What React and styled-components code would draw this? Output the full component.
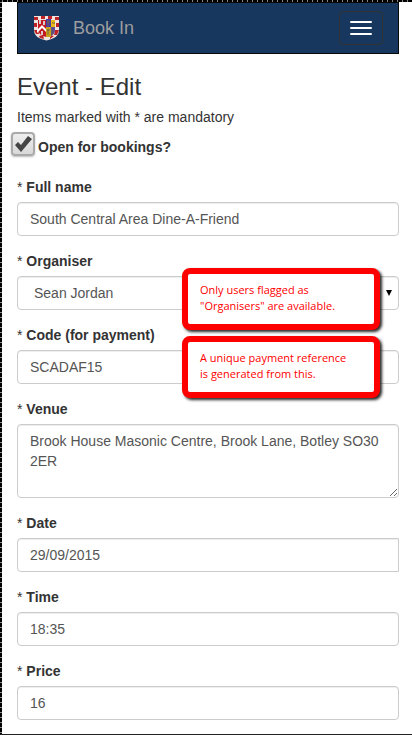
import React from "react";
import styled, { createGlobalStyle, css } from "styled-components";

const GlobalStyle = createGlobalStyle`
  *, *::before, *::after { box-sizing: border-box; }
  body {
    margin: 0;
    background: #fff;
    color: #333;
    font: 14px/20px "Liberation Sans", Arial, sans-serif;
  }
`;

const Page = styled.div`
  padding: 2px 13px 14px 17px;
  border-bottom: 1px solid #222;
  background:
    repeating-linear-gradient(to right, #000 0 2px, #888 2px 3px, #000 3px 5px) top left / 100% 2px no-repeat,
    repeating-linear-gradient(to bottom, #000 0 2px, #888 2px 3px, #000 3px 5px) top left / 2px 100% no-repeat,
    #fff;
`;

const Navbar = styled.header`
  display: flex;
  align-items: center;
  height: 52px;
  padding: 0 15px;
  border: 1px solid #080808;
  background: #18375f;
`;

const Brand = styled.a`
  display: flex;
  align-items: center;
  gap: 14px;
  color: #9d9d9d;
  font-size: 18px;
  text-decoration: none;
`;

const MenuButton = styled.button`
  display: flex;
  flex-direction: column;
  gap: 4px;
  margin-left: auto;
  padding: 9px 10px;
  border: 1px solid #333;
  border-radius: 4px;
  background: transparent;
`;

const MenuBar = styled.span`
  width: 22px;
  height: 2px;
  border-radius: 1px;
  background: #fff;
`;

const Title = styled.h1`
  margin: 20px 0 7px;
  font-size: 24px;
  line-height: 26px;
  font-weight: 400;
`;

const Note = styled.p`
  margin: 0;
`;

const CheckRow = styled.label`
  display: flex;
  align-items: center;
  gap: 3px;
  height: 24px;
  margin: 5px 0 21px -6px;
  font-weight: 700;
`;

const CheckBox = styled.span`
  display: grid;
  width: 24px;
  height: 24px;

  > * { grid-area: 1 / 1; }
  > svg { pointer-events: none; }
`;

const CheckInput = styled.input`
  appearance: none;
  width: 24px;
  height: 24px;
  margin: 0;
  border: 2px solid #aaa;
  border-radius: 4px;
  background: linear-gradient(#eee, #d8d8d8);
  box-shadow: 0 1px 2px #bbb;
`;

const CheckText = styled.span`
  padding-top: 5px;
`;

const Form = styled.form`
  display: grid;
  gap: 15px;
`;

const Field = styled.div`
  position: relative;
  display: grid;
  gap: 5px;
`;

const Label = styled.label`
  font-weight: 700;
`;

const Star = styled.span`
  font-weight: 400;
`;

const control = css`
  display: block;
  width: 100%;
  height: 34px;
  margin: 0;
  padding: 6px 12px;
  border: 1px solid #ccc;
  border-radius: 4px;
  background: #fff;
  box-shadow: inset 0 1px 1px rgba(0, 0, 0, 0.075);
  color: #555;
  font: inherit;
`;

const TextInput = styled.input`
  ${control}
  ${(p) => p.$squareEnd && "border-top-right-radius: 0; border-bottom-right-radius: 0;"}
`;

const TextArea = styled.textarea`
  ${control}
  height: 74px;
  resize: vertical;
`;

const SelectWrap = styled.div`
  display: grid;
  align-items: center;

  > * { grid-area: 1 / 1; }
  > svg { justify-self: end; margin-right: 7px; pointer-events: none; }
`;

const Select = styled.select`
  ${control}
  appearance: none;
  padding: 6px 16px;
`;

const Callout = styled.aside`
  position: absolute;
  z-index: 1;
  top: ${(p) => p.$top}px;
  right: 19px;
  width: 198px;
  padding: 8px 12px 10px;
  border: 6px solid #f00;
  border-radius: 8px;
  background: #fff;
  box-shadow: 2px 2px 3px rgba(0, 0, 0, 0.85);
  color: #f00;
  font: 11px/16px "Open Sans", "Noto Sans", sans-serif;
  white-space: pre-line;
`;

function Crest() {
  return (
    <svg width="26" height="26" viewBox="0 0 26 26" aria-hidden="true">
      <path d="M1 1h25v14c0 6-5 9-12.500 10.500C6 24 1 21 1 15Z" fill="#f0e4e0" />
      <path d="M1 2h4v3H1Zm7-1h4v3H8Zm7 0h4v3h-4Zm7 1h4v3h-4ZM1 8h3v4H1Zm22 0h3v4h-3ZM1 15h4l1 4H3ZM22 15h4l-2 5h-3ZM6 21l4-1 1 4-4-1Zm11-1 4 1-4 3Z" fill="#bd2326" />
      <path d="M5 5h8.500v17C8 21 5 18 5 14Z" fill="#c5161d" />
      <path d="M13 4h5v9h-5Z" fill="#493ba5" />
      <path d="M18 5h4v7h-4Z" fill="#e9b914" />
      <path d="M13 12h5v10h-5Z" fill="#c9a51c" />
      <path d="M18 12h4v3c0 3-2 5-4 6Z" fill="#5b4b96" />
      <path d="m4 15 5-5 4 4v3l-4-4-5 5Z" fill="#fff" />
      <path d="M6 5h2v4H6Zm4 1h2v4h-2ZM8 16h2v4H8Z" fill="#d8c9cc" />
      <path d="M14 7h3m-2-2v6m4-3h3m-8 7h3m-2-1v6m4-5v5" stroke="#756344" />
    </svg>
  );
}

function TextField({ id, label, value, squareEnd, children }) {
  return (
    <Field>
      <Label htmlFor={id}><Star>*</Star> {label}</Label>
      <TextInput id={id} defaultValue={value} $squareEnd={squareEnd} />
      {children}
    </Field>
  );
}

export default function App() {
  return (
    <>
      <GlobalStyle />
      <Page>
        <Navbar>
          <Brand href="#"><Crest />Book In</Brand>
          <MenuButton type="button" aria-label="Toggle navigation">
            <MenuBar /><MenuBar /><MenuBar />
          </MenuButton>
        </Navbar>
        <main>
          <Title>Event - Edit</Title>
          <Note>Items marked with * are mandatory</Note>
          <CheckRow>
            <CheckBox>
              <CheckInput type="checkbox" defaultChecked />
              <svg width="24" height="24" viewBox="0 0 24 24" aria-hidden="true">
                <path d="m4 13 3-3 3 3 7-9 4 3-11 13Z" fill="#444" />
              </svg>
            </CheckBox>
            <CheckText>Open for bookings?</CheckText>
          </CheckRow>
          <Form>
            <TextField id="name" label="Full name" value="South Central Area Dine-A-Friend" />
            <Field>
              <Label htmlFor="organiser"><Star>*</Star> Organiser</Label>
              <SelectWrap>
                <Select id="organiser"><option>Sean Jordan</option></Select>
                <svg width="6" height="6" viewBox="0 0 6 6" aria-hidden="true"><path d="M0 0h6L3 6Z" /></svg>
              </SelectWrap>
              <Callout $top={17}>{'Only users flagged as\n"Organisers" are available.'}</Callout>
            </Field>
            <TextField id="code" label="Code (for payment)" value="SCADAF15">
              <Callout $top={11}>{"A unique payment reference\nis generated from this."}</Callout>
            </TextField>
            <Field>
              <Label htmlFor="venue"><Star>*</Star> Venue</Label>
              <TextArea id="venue" defaultValue="Brook House Masonic Centre, Brook Lane, Botley SO30 2ER" />
            </Field>
            <TextField id="date" label="Date" value="29/09/2015" squareEnd />
            <TextField id="time" label="Time" value="18:35" />
            <TextField id="price" label="Price" value="16" />
          </Form>
        </main>
      </Page>
    </>
  );
}
